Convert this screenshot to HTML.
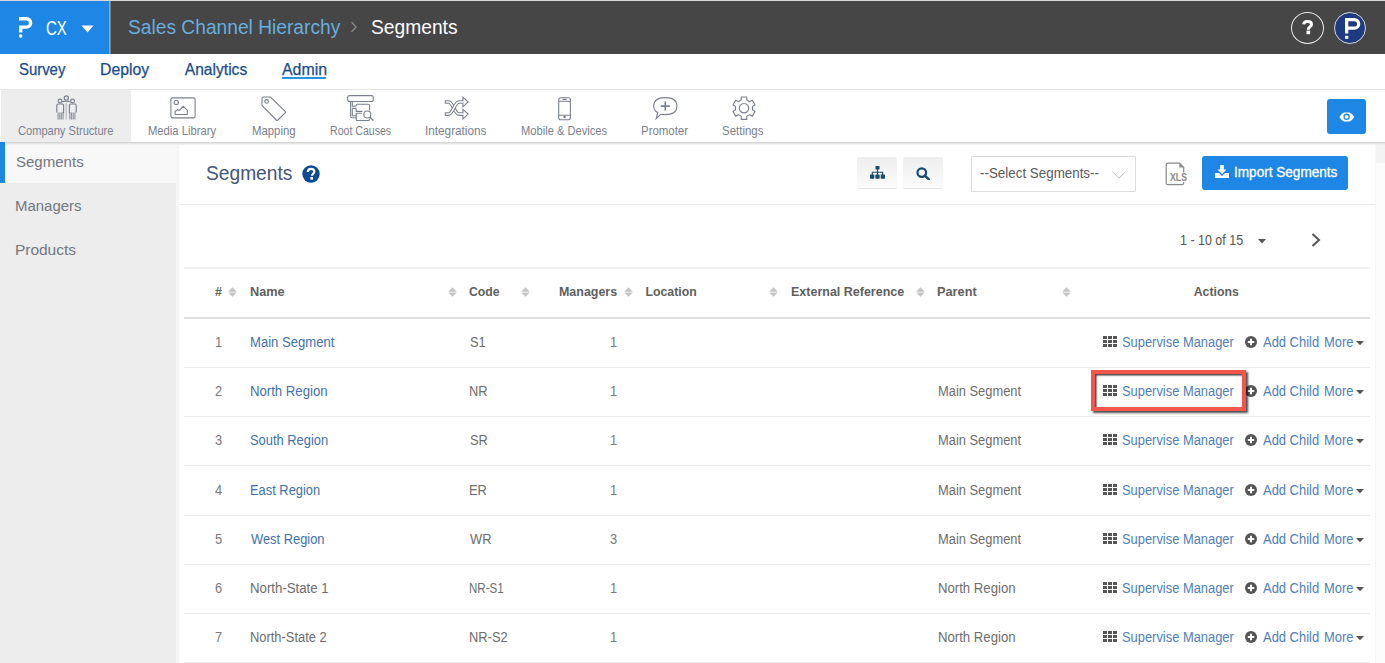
<!DOCTYPE html>
<html><head><meta charset="utf-8">
<style>
*{box-sizing:border-box;margin:0;padding:0}
html,body{width:1385px;height:663px;overflow:hidden;background:#f7f7f7;font-family:"Liberation Sans",sans-serif;position:relative}
.a{position:absolute;white-space:nowrap;line-height:1}
#top{position:absolute;left:0;top:0;width:1385px;height:54px;background:#464646;border-top:1px solid #d8d8d8}
#brand{position:absolute;left:0;top:1px;width:109px;height:53px;background:#1e87e5}
#brandsep{position:absolute;left:109px;top:1px;width:2px;height:53px;background:linear-gradient(90deg,#6db0ea 50%,#7a7f85 50%)}
#nav{position:absolute;left:0;top:54px;width:1385px;height:35px;background:#fff}
#tb{position:absolute;left:0;top:89px;width:1385px;height:53px;background:#fff;border-top:1px solid #e3e3e3}
#tbshadow{position:absolute;left:0;top:142px;width:1385px;height:3px;background:linear-gradient(#d0d0d0,#e8e8e8 60%,#f5f5f5)}
#side{position:absolute;left:0;top:145px;width:176px;height:518px;background:#ededed}
#panel{position:absolute;left:179px;top:145px;width:1196px;height:518px;background:#fff}
.tbl{color:#7b818d}
.nav{color:#1b4c8c;-webkit-text-stroke:0.25px #1b4c8c}
.side{color:#73777f}
.th{color:#606060}
.td{color:#6e6e6e}
.num{color:#7a7a7a}
.lk{color:#4272ad}
.al{color:#5080b8}
</style></head>
<body>
<div id="top"></div>
<div id="brand"></div>
<div id="brandsep"></div>
<div id="nav"></div>
<div id="tb"></div>
<div id="tbshadow"></div>
<div id="side"></div>
<div id="panel"></div>
<svg class="a" style="left:18.75px;top:17.2px" width="16" height="22" viewBox="0 0 16 22"><path d="M0 1.7 H7.45 A4.2 4.2 0 0 1 7.45 10.1 H1.7 V15.6" fill="none" stroke="#fff" stroke-width="3.4" stroke-linejoin="miter"/><circle cx="1.6" cy="19" r="1.8" fill="#fff"/></svg>
<div class="a " style="left:46.30px;top:18px;font-size:20px;color:#fff;transform:scaleX(0.7510);transform-origin:0 0;">CX</div>
<svg class="a" style="left:81px;top:25px" width="13" height="8" viewBox="0 0 13 8"><path d="M0.5 0.5 H12.5 L6.5 7.5 Z" fill="#fff"/></svg>
<div class="a " style="left:128.10px;top:17px;font-size:20.5px;color:#68aedf;transform:scaleX(0.9363);transform-origin:0 0;">Sales Channel Hierarchy</div>
<svg class="a" style="left:350px;top:21px" width="8" height="12" viewBox="0 0 8 12"><path d="M1.5 1 L6 6 L1.5 11" fill="none" stroke="#8a8a8a" stroke-width="1.3"/></svg>
<div class="a " style="left:371.00px;top:18px;font-size:19.6px;color:#fff;transform:scaleX(0.9814);transform-origin:0 0;">Segments</div>
<div class="a" style="left:1291px;top:12px;width:33px;height:32px;border:1.2px solid #e8e8e8;border-radius:50%"></div>
<svg class="a" style="left:1301px;top:19px" width="14" height="17" viewBox="0 0 14 17"><path d="M2.7 5.4 C2.9 3.3 4.6 2.6 6.6 2.6 C8.7 2.6 10.5 3.6 10.5 5.4 C10.5 7.6 7.3 7.8 7.3 10.8" fill="none" stroke="#fff" stroke-width="3"/><rect x="5.5" y="11.6" width="3.6" height="3.6" fill="#fff"/></svg>
<div class="a" style="left:1334px;top:12px;width:32px;height:32px;border:1.2px solid #d8d8d8;border-radius:50%;background:#1e3a80"></div>
<svg class="a" style="left:1344.8px;top:17.7px" width="17" height="22" viewBox="0 0 17 22"><path d="M1.65 15.6 V1.65 H9.4 A4.275 4.275 0 0 1 9.4 10.2 H1.65" fill="none" stroke="#fff" stroke-width="3.3" stroke-linejoin="miter"/><rect x="0" y="17.8" width="3.3" height="3" fill="#fff"/></svg>
<div class="a nav" style="left:18.73px;top:62px;font-size:15.6px;transform:scaleX(0.9550);transform-origin:0 0;">Survey</div>
<div class="a nav" style="left:99.97px;top:62px;font-size:15.6px;transform:scaleX(1.0118);transform-origin:0 0;">Deploy</div>
<div class="a nav" style="left:184.80px;top:62px;font-size:15.6px;">Analytics</div>
<div class="a nav" style="left:282.10px;top:62px;font-size:15.6px;transform:scaleX(1.0198);transform-origin:0 0;">Admin</div>
<div class="a" style="left:282px;top:77px;width:44px;height:2px;background:#2a93e0"></div>
<div class="a" style="left:1px;top:90px;width:130px;height:52px;background:#ededed"></div>
<svg class="a" style="left:50px;top:92px" width="34" height="30" viewBox="0 0 34 30" fill="none" stroke="#7a818e" stroke-width="1.15"><circle cx="16.3" cy="5.9" r="2.1"/><circle cx="10" cy="9" r="1.9"/><circle cx="22.6" cy="9" r="1.9"/><path d="M12 9.8 Q16.3 8.6 20.6 9.8"/><path d="M6.8 20.6 V13.3 Q6.8 12 8.1 12 H12.3 Q13.6 12 13.6 13.3 V20.6 H12.6"/><path d="M26.2 20.6 V13.3 Q26.2 12 24.9 12 H20.7 Q19.4 12 19.4 13.3 V20.6 H20.4"/><path d="M16.3 11 V27.5" stroke-opacity="0.45"/><path d="M8 20.5 V27.6 M9.7 20.5 V27.6 M11.4 20.5 V27.6 M13.1 20.5 V27.6 M19.8 20.5 V27.6 M21.5 20.5 V27.6 M23.2 20.5 V27.6 M24.9 20.5 V27.6" stroke-opacity="0.8"/></svg>
<svg class="a" style="left:169.5px;top:97px" width="26" height="22" viewBox="0 0 26 22" fill="none" stroke="#7a818e" stroke-width="1.1"><rect x="0.9" y="0.9" width="24.2" height="20" rx="1.6"/><circle cx="6.3" cy="5.4" r="2.1"/><path d="M3.6 17.5 V14.5 L6.2 12.5 L7.6 13.6 L11.7 9.3 L15.8 13.2 V17.5 Z" transform="translate(1.5 0)"/></svg>
<svg class="a" style="left:261px;top:96px" width="26" height="25" viewBox="0 0 26 25" fill="none" stroke="#7a818e" stroke-width="1.1"><path d="M1 2.5 Q1 1 2.5 1 H9.5 L24.2 15.3 Q25 16.1 24.2 16.9 L16.9 24 Q16.1 24.8 15.3 24 L1 9.5 Z"/><circle cx="5.6" cy="5.4" r="1.8"/></svg>
<svg class="a" style="left:340px;top:92px" width="40" height="34" viewBox="0 0 40 34" fill="none" stroke="#7a818e" stroke-width="1.1"><rect x="7.6" y="3.6" width="25.7" height="5.9" rx="2"/><path d="M10.6 9.5 V24.3 Q10.6 25.7 12 25.7 H16.2"/><path d="M12.3 9.5 V14.3 H16.2 M12.3 16.4 H16.2 M12.3 16.4 V23.8 H16.2"/><path d="M16.2 14 V13.3 Q16.2 12.3 17.2 12.3 H28.5 Q29.5 12.3 29.5 13.3 V18.5"/><path d="M16.2 16.4 V19.4 H22.5 M22 21.3 H16.2 V27.5 Q16.2 28.5 17.2 28.5 H28.5 Q29.5 28.5 29.5 27.5 V26.5"/><circle cx="27.3" cy="22.5" r="3.5" fill="#fff"/><path d="M29.9 25.1 L33.4 28.8" stroke-width="1.4"/></svg>
<svg class="a" style="left:438px;top:92px" width="36" height="32" viewBox="0 0 36 32" fill="none"><g stroke="#7a818e" stroke-width="3.7"><path d="M6.8 10 H10.5 C15 10 16.5 22.1 21 22.1 H25"/></g><g stroke="#7a818e" stroke-width="1.1"><path d="M24.9 17.3 L30.2 22.1 L24.9 26.900000000000002 Z" fill="#fff"/></g><g stroke="#fff" stroke-width="1.5"><path d="M7.9 10 H10.5 C15 10 16.5 22.1 21 22.1 H25.6"/></g><g stroke="#7a818e" stroke-width="3.7"><path d="M6.8 22.1 H10.5 C15 22.1 16.5 10 21 10 H25"/></g><g stroke="#7a818e" stroke-width="1.1"><path d="M24.9 5.2 L30.2 10 L24.9 14.8 Z" fill="#fff"/></g><g stroke="#fff" stroke-width="1.5"><path d="M7.9 22.1 H10.5 C15 22.1 16.5 10 21 10 H25.6"/></g></svg>
<svg class="a" style="left:557.5px;top:96.5px" width="14" height="24" viewBox="0 0 14 24" fill="none" stroke="#7a818e" stroke-width="1.1"><rect x="0.7" y="0.7" width="11.7" height="22" rx="2"/><path d="M0.7 4.3 H12.4 M0.7 18.2 H12.4 M4.5 2.4 H8.6"/><circle cx="6.55" cy="20.1" r="0.7" fill="#7a818e"/></svg>
<svg class="a" style="left:652.5px;top:97px" width="26" height="23" viewBox="0 0 26 23" fill="none" stroke="#7a818e" stroke-width="1.1"><path d="M4.8 15.6 Q0.7 13.6 0.7 9.2 Q0.7 0.6 12.3 0.6 Q23.9 0.6 23.9 9.2 Q23.9 17.6 12.3 17.6 Q9.8 17.6 8 17.2 L3.2 21.6 Z"/><path d="M12.3 4.6 V13.6 M7.8 9.1 H16.8" stroke-width="1.7"/></svg>
<svg class="a" style="left:732px;top:96px" width="24" height="25" viewBox="0 0 24 25" fill="none" stroke="#7a818e" stroke-width="1.15"><path d="M9.20 4.07 L9.32 1.02 L14.68 1.02 L14.80 4.07 A8.6 8.6 0 0 1 17.64 5.71 L20.34 4.28 L23.03 8.93 L20.44 10.56 A8.6 8.6 0 0 1 20.44 13.84 L23.03 15.47 L20.34 20.12 L17.64 18.69 A8.6 8.6 0 0 1 14.80 20.33 L14.68 23.38 L9.32 23.38 L9.20 20.33 A8.6 8.6 0 0 1 6.36 18.69 L3.66 20.12 L0.97 15.47 L3.56 13.84 A8.6 8.6 0 0 1 3.56 10.56 L0.97 8.93 L3.66 4.28 L6.36 5.71 A8.6 8.6 0 0 1 9.20 4.07 Z" stroke-linejoin="round"/><circle cx="12" cy="12.2" r="4.7"/></svg>
<div class="a tbl" style="left:18.45px;top:125px;font-size:12.2px;transform:scaleX(0.9090);transform-origin:0 0;">Company Structure</div>
<div class="a tbl" style="left:148.48px;top:125px;font-size:12.2px;transform:scaleX(0.9217);transform-origin:0 0;">Media Library</div>
<div class="a tbl" style="left:251.87px;top:125px;font-size:12.2px;transform:scaleX(0.9331);transform-origin:0 0;">Mapping</div>
<div class="a tbl" style="left:329.73px;top:125px;font-size:12.2px;transform:scaleX(0.8680);transform-origin:0 0;">Root Causes</div>
<div class="a tbl" style="left:424.94px;top:125px;font-size:12.2px;transform:scaleX(0.9638);transform-origin:0 0;">Integrations</div>
<div class="a tbl" style="left:520.69px;top:125px;font-size:12.2px;transform:scaleX(0.9144);transform-origin:0 0;">Mobile &amp; Devices</div>
<div class="a tbl" style="left:641.06px;top:125px;font-size:12.2px;transform:scaleX(0.9386);transform-origin:0 0;">Promoter</div>
<div class="a tbl" style="left:722.48px;top:125px;font-size:12.2px;transform:scaleX(0.9413);transform-origin:0 0;">Settings</div>
<div class="a" style="left:1327px;top:99px;width:39px;height:35px;background:#1e87e5;border-radius:3px"></div>
<svg class="a" style="left:1339px;top:111.8px" width="15.5" height="10" viewBox="0 0 15.5 10"><path d="M0.3 5 Q2.5 1.2 5 0.5 H10.5 Q13 1.2 15.2 5 Q13 8.8 10.5 9.5 H5 Q2.5 8.8 0.3 5 Z" fill="#fff"/><circle cx="7.6" cy="4.8" r="3.2" fill="#1e87e5"/><circle cx="7.6" cy="4.8" r="1.9" fill="#fff"/></svg>
<div class="a" style="left:0;top:145px;width:176px;height:38px;background:#f8f8f8"></div>
<div class="a" style="left:0;top:142px;width:4.5px;height:41px;background:#1e87e5"></div>
<div class="a side" style="left:15.63px;top:154px;font-size:15.5px;transform:scaleX(0.9692);transform-origin:0 0;">Segments</div>
<div class="a side" style="left:14.93px;top:198px;font-size:15.5px;transform:scaleX(0.9653);transform-origin:0 0;">Managers</div>
<div class="a side" style="left:14.89px;top:242px;font-size:15.5px;">Products</div>
<div class="a" style="left:1376px;top:145px;width:9px;height:18px;background:#f3f3f3"></div>
<div class="a" style="left:1376px;top:163px;width:9px;height:500px;background:#fcfcfc"></div>
<div class="a " style="left:206.20px;top:164px;font-size:19.6px;color:#46557a;transform:scaleX(0.9791);transform-origin:0 0;">Segments</div>
<svg class="a" style="left:302px;top:164.5px" width="18" height="18" viewBox="0 0 18 18"><circle cx="9" cy="9" r="8.7" fill="#0c4b94"/><path d="M5.8 7 C5.8 4.8 7.2 3.8 9 3.8 C10.9 3.8 12.3 4.9 12.3 6.6 C12.3 8.7 10 8.9 10 10.8" fill="none" stroke="#fff" stroke-width="2.2"/><rect x="8.4" y="12" width="2.6" height="2.6" fill="#fff"/></svg>
<div class="a" style="left:179px;top:204px;width:1196px;height:1px;background:#e8eaef"></div>
<div class="a" style="left:856.5px;top:157px;width:40px;height:32px;background:linear-gradient(#eeeeee,#fbfbfb);border-bottom:1px solid #e6e6e6;border-radius:2px"></div>
<div class="a" style="left:903px;top:157px;width:40px;height:32px;background:linear-gradient(#eeeeee,#fbfbfb);border-bottom:1px solid #e6e6e6;border-radius:2px"></div>
<svg class="a" style="left:869.5px;top:166px" width="15" height="13" viewBox="0 0 15 13" fill="#174b6e"><rect x="5.5" y="0" width="4" height="3.5" rx="0.5"/><path d="M7.5 3 V6 M2.3 9 V6.2 H12.7 V9" fill="none" stroke="#174b6e" stroke-width="1.1"/><rect x="0" y="8.5" width="4.3" height="4.2" rx="0.6"/><rect x="5.35" y="8.5" width="4.3" height="4.2" rx="0.6"/><rect x="10.7" y="8.5" width="4.3" height="4.2" rx="0.6"/><path d="M7.5 6 V9" stroke="#174b6e" stroke-width="1.1"/></svg>
<svg class="a" style="left:915.5px;top:166.5px" width="15" height="13" viewBox="0 0 15 13"><circle cx="5.8" cy="5.6" r="4.3" fill="none" stroke="#174b6e" stroke-width="2.2"/><path d="M8.8 8.6 L12.8 12.4" stroke="#174b6e" stroke-width="2.4" stroke-linecap="round"/></svg>
<div class="a" style="left:970.5px;top:156px;width:165px;height:36px;background:#fff;border:1px solid #dcdcdc;border-radius:1px"></div>
<div class="a " style="left:980.08px;top:166px;font-size:14.3px;color:#5a5a5a;transform:scaleX(0.9359);transform-origin:0 0;">--Select Segments--</div>
<svg class="a" style="left:1112px;top:170.5px" width="14" height="8" viewBox="0 0 14 8"><path d="M0.5 0.8 L7 7.2 L13.5 0.8" fill="none" stroke="#b9bcc2" stroke-width="1"/></svg>
<svg class="a" style="left:1165px;top:162px" width="24" height="24" viewBox="0 0 24 24"><path d="M18.7 10.4 V5.4 L14.5 1.2 H3 Q1.2 1.2 1.2 3 V20.9 Q1.2 22.7 3 22.7 H16.9 Q18.7 22.7 18.7 20.9 V19.9" fill="none" stroke="#8b8b8b" stroke-width="1.25"/><path d="M14.3 1.2 V5.6 H18.7 Z" fill="#8b8b8b"/><text x="5" y="18.7" font-family="Liberation Sans" font-size="10.6" font-weight="bold" fill="#8b8b8b" textLength="17" lengthAdjust="spacingAndGlyphs">XLS</text></svg>
<div class="a" style="left:1202px;top:156px;width:146px;height:34px;background:#1e87e5;border-radius:3px"></div>
<svg class="a" style="left:1215px;top:164.5px" width="14" height="13" viewBox="0 0 14 13" fill="#fff"><path d="M5.2 0 H8.8 V4.5 H11.5 L7 9 L2.5 4.5 H5.2 Z"/><path d="M0 8 H4 L7 11 L10 8 H14 V13 H0 Z"/></svg>
<div class="a " style="left:1233.74px;top:165px;font-size:14px;color:#fff;transform:scaleX(0.9698);transform-origin:0 0;-webkit-text-stroke:0.3px #fff;">Import Segments</div>
<div class="a " style="left:1180.02px;top:233px;font-size:14px;color:#555;transform:scaleX(0.8907);transform-origin:0 0;">1 - 10 of 15</div>
<svg class="a" style="left:1257.5px;top:238.5px" width="8" height="5" viewBox="0 0 8 5"><path d="M0 0 H8 L4 4.5 Z" fill="#555"/></svg>
<svg class="a" style="left:1310.5px;top:232.5px" width="10" height="14" viewBox="0 0 10 14"><path d="M1.5 1 L8 7 L1.5 13" fill="none" stroke="#555" stroke-width="2"/></svg>
<div class="a" style="left:184px;top:267px;width:1186px;height:2px;background:#f2f2f2"></div>
<div class="a" style="left:184px;top:317px;width:1186px;height:2px;background:#dedede"></div>
<div class="a th" style="left:214.50px;top:286px;font-size:12.3px;font-weight:700;transform:scaleX(1.0134);transform-origin:0 0;">#</div>
<svg class="a" style="left:228px;top:287px" width="9" height="10" viewBox="-0.5 0 9 10" fill="#c4c4c4"><path d="M4 0.2 L8.3 4.7 H-0.3 Z M-0.3 5.4 H8.3 L4 9.8 Z"/></svg>
<div class="a th" style="left:250.17px;top:286px;font-size:12.3px;font-weight:700;transform:scaleX(1.0337);transform-origin:0 0;">Name</div>
<svg class="a" style="left:448px;top:287px" width="9" height="10" viewBox="-0.5 0 9 10" fill="#c4c4c4"><path d="M4 0.2 L8.3 4.7 H-0.3 Z M-0.3 5.4 H8.3 L4 9.8 Z"/></svg>
<div class="a th" style="left:469.20px;top:286px;font-size:12.3px;font-weight:700;transform:scaleX(0.9947);transform-origin:0 0;">Code</div>
<svg class="a" style="left:520.5px;top:287px" width="9" height="10" viewBox="-0.5 0 9 10" fill="#c4c4c4"><path d="M4 0.2 L8.3 4.7 H-0.3 Z M-0.3 5.4 H8.3 L4 9.8 Z"/></svg>
<div class="a th" style="left:558.79px;top:286px;font-size:12.3px;font-weight:700;transform:scaleX(1.0119);transform-origin:0 0;">Managers</div>
<svg class="a" style="left:623.5px;top:287px" width="9" height="10" viewBox="-0.5 0 9 10" fill="#c4c4c4"><path d="M4 0.2 L8.3 4.7 H-0.3 Z M-0.3 5.4 H8.3 L4 9.8 Z"/></svg>
<div class="a th" style="left:645.50px;top:286px;font-size:12.3px;font-weight:700;">Location</div>
<svg class="a" style="left:769px;top:287px" width="9" height="10" viewBox="-0.5 0 9 10" fill="#c4c4c4"><path d="M4 0.2 L8.3 4.7 H-0.3 Z M-0.3 5.4 H8.3 L4 9.8 Z"/></svg>
<div class="a th" style="left:791.39px;top:286px;font-size:12.3px;font-weight:700;transform:scaleX(1.0159);transform-origin:0 0;">External Reference</div>
<svg class="a" style="left:915.5px;top:287px" width="9" height="10" viewBox="-0.5 0 9 10" fill="#c4c4c4"><path d="M4 0.2 L8.3 4.7 H-0.3 Z M-0.3 5.4 H8.3 L4 9.8 Z"/></svg>
<div class="a th" style="left:937.47px;top:286px;font-size:12.3px;font-weight:700;transform:scaleX(1.0366);transform-origin:0 0;">Parent</div>
<svg class="a" style="left:1062px;top:287px" width="9" height="10" viewBox="-0.5 0 9 10" fill="#c4c4c4"><path d="M4 0.2 L8.3 4.7 H-0.3 Z M-0.3 5.4 H8.3 L4 9.8 Z"/></svg>
<div class="a th" style="left:1193.70px;top:286px;font-size:12.3px;font-weight:700;">Actions</div>
<div class="a num" style="left:215.28px;top:335px;font-size:14px;transform:scaleX(0.9204);transform-origin:0 0;">1</div>
<div class="a lk" style="left:249.58px;top:335px;font-size:14px;transform:scaleX(0.9347);transform-origin:0 0;">Main Segment</div>
<div class="a td" style="left:469.60px;top:335px;font-size:14px;transform:scaleX(0.9204);transform-origin:0 0;">S1</div>
<div class="a num" style="left:610.36px;top:335px;font-size:14px;transform:scaleX(0.9204);transform-origin:0 0;">1</div>
<svg class="a" style="left:1103px;top:336.00px" width="14" height="11" viewBox="0 0 14 11" fill="#555"><rect x="0" y="0" width="4" height="3"/><rect x="5" y="0" width="4" height="3"/><rect x="10" y="0" width="4" height="3"/><rect x="0" y="4" width="4" height="3"/><rect x="5" y="4" width="4" height="3"/><rect x="10" y="4" width="4" height="3"/><rect x="0" y="8" width="4" height="3"/><rect x="5" y="8" width="4" height="3"/><rect x="10" y="8" width="4" height="3"/></svg>
<div class="a al" style="left:1122.00px;top:336px;font-size:13.8px;transform:scaleX(0.9348);transform-origin:0 0;">Supervise Manager</div>
<svg class="a" style="left:1245px;top:335.80px" width="12" height="12" viewBox="0 0 12 12"><circle cx="6" cy="6" r="6" fill="#555"/><path d="M6 2.8 V9.2 M2.8 6 H9.2" stroke="#fff" stroke-width="2"/></svg>
<div class="a al" style="left:1263.00px;top:336px;font-size:13.8px;transform:scaleX(0.9380);transform-origin:0 0;">Add Child</div>
<div class="a al" style="left:1323.69px;top:336px;font-size:13.8px;transform:scaleX(0.9361);transform-origin:0 0;">More</div>
<svg class="a" style="left:1355.5px;top:341.20px" width="8" height="5" viewBox="0 0 8 5"><path d="M0 0 H8 L4 4.2 Z" fill="#555"/></svg>
<div class="a" style="left:184px;top:367.00px;width:1186px;height:1px;background:#ececec"></div>
<div class="a num" style="left:215.38px;top:384px;font-size:14px;transform:scaleX(0.9204);transform-origin:0 0;">2</div>
<div class="a lk" style="left:249.57px;top:384px;font-size:14px;transform:scaleX(0.9403);transform-origin:0 0;">North Region</div>
<div class="a td" style="left:468.99px;top:384px;font-size:14px;transform:scaleX(0.9204);transform-origin:0 0;">NR</div>
<div class="a num" style="left:610.36px;top:384px;font-size:14px;transform:scaleX(0.9204);transform-origin:0 0;">1</div>
<div class="a td" style="left:937.99px;top:384px;font-size:14px;transform:scaleX(0.9204);transform-origin:0 0;">Main Segment</div>
<svg class="a" style="left:1103px;top:385.00px" width="14" height="11" viewBox="0 0 14 11" fill="#555"><rect x="0" y="0" width="4" height="3"/><rect x="5" y="0" width="4" height="3"/><rect x="10" y="0" width="4" height="3"/><rect x="0" y="4" width="4" height="3"/><rect x="5" y="4" width="4" height="3"/><rect x="10" y="4" width="4" height="3"/><rect x="0" y="8" width="4" height="3"/><rect x="5" y="8" width="4" height="3"/><rect x="10" y="8" width="4" height="3"/></svg>
<div class="a al" style="left:1122.00px;top:385px;font-size:13.8px;transform:scaleX(0.9348);transform-origin:0 0;">Supervise Manager</div>
<svg class="a" style="left:1245px;top:384.80px" width="12" height="12" viewBox="0 0 12 12"><circle cx="6" cy="6" r="6" fill="#555"/><path d="M6 2.8 V9.2 M2.8 6 H9.2" stroke="#fff" stroke-width="2"/></svg>
<div class="a al" style="left:1263.00px;top:385px;font-size:13.8px;transform:scaleX(0.9380);transform-origin:0 0;">Add Child</div>
<div class="a al" style="left:1323.69px;top:385px;font-size:13.8px;transform:scaleX(0.9361);transform-origin:0 0;">More</div>
<svg class="a" style="left:1355.5px;top:390.20px" width="8" height="5" viewBox="0 0 8 5"><path d="M0 0 H8 L4 4.2 Z" fill="#555"/></svg>
<div class="a" style="left:184px;top:416.00px;width:1186px;height:1px;background:#ececec"></div>
<div class="a num" style="left:215.48px;top:433px;font-size:14px;transform:scaleX(0.9204);transform-origin:0 0;">3</div>
<div class="a lk" style="left:250.20px;top:433px;font-size:14px;transform:scaleX(0.9204);transform-origin:0 0;">South Region</div>
<div class="a td" style="left:469.60px;top:433px;font-size:14px;transform:scaleX(0.9204);transform-origin:0 0;">SR</div>
<div class="a num" style="left:610.36px;top:433px;font-size:14px;transform:scaleX(0.9204);transform-origin:0 0;">1</div>
<div class="a td" style="left:937.99px;top:433px;font-size:14px;transform:scaleX(0.9204);transform-origin:0 0;">Main Segment</div>
<svg class="a" style="left:1103px;top:434.00px" width="14" height="11" viewBox="0 0 14 11" fill="#555"><rect x="0" y="0" width="4" height="3"/><rect x="5" y="0" width="4" height="3"/><rect x="10" y="0" width="4" height="3"/><rect x="0" y="4" width="4" height="3"/><rect x="5" y="4" width="4" height="3"/><rect x="10" y="4" width="4" height="3"/><rect x="0" y="8" width="4" height="3"/><rect x="5" y="8" width="4" height="3"/><rect x="10" y="8" width="4" height="3"/></svg>
<div class="a al" style="left:1122.00px;top:434px;font-size:13.8px;transform:scaleX(0.9348);transform-origin:0 0;">Supervise Manager</div>
<svg class="a" style="left:1245px;top:433.80px" width="12" height="12" viewBox="0 0 12 12"><circle cx="6" cy="6" r="6" fill="#555"/><path d="M6 2.8 V9.2 M2.8 6 H9.2" stroke="#fff" stroke-width="2"/></svg>
<div class="a al" style="left:1263.00px;top:434px;font-size:13.8px;transform:scaleX(0.9380);transform-origin:0 0;">Add Child</div>
<div class="a al" style="left:1323.69px;top:434px;font-size:13.8px;transform:scaleX(0.9361);transform-origin:0 0;">More</div>
<svg class="a" style="left:1355.5px;top:439.20px" width="8" height="5" viewBox="0 0 8 5"><path d="M0 0 H8 L4 4.2 Z" fill="#555"/></svg>
<div class="a" style="left:184px;top:465.00px;width:1186px;height:1px;background:#ececec"></div>
<div class="a num" style="left:215.48px;top:483px;font-size:14px;transform:scaleX(0.9204);transform-origin:0 0;">4</div>
<div class="a lk" style="left:249.59px;top:483px;font-size:14px;transform:scaleX(0.9204);transform-origin:0 0;">East Region</div>
<div class="a td" style="left:468.99px;top:483px;font-size:14px;transform:scaleX(0.9204);transform-origin:0 0;">ER</div>
<div class="a num" style="left:610.36px;top:483px;font-size:14px;transform:scaleX(0.9204);transform-origin:0 0;">1</div>
<div class="a td" style="left:937.99px;top:483px;font-size:14px;transform:scaleX(0.9204);transform-origin:0 0;">Main Segment</div>
<svg class="a" style="left:1103px;top:484.00px" width="14" height="11" viewBox="0 0 14 11" fill="#555"><rect x="0" y="0" width="4" height="3"/><rect x="5" y="0" width="4" height="3"/><rect x="10" y="0" width="4" height="3"/><rect x="0" y="4" width="4" height="3"/><rect x="5" y="4" width="4" height="3"/><rect x="10" y="4" width="4" height="3"/><rect x="0" y="8" width="4" height="3"/><rect x="5" y="8" width="4" height="3"/><rect x="10" y="8" width="4" height="3"/></svg>
<div class="a al" style="left:1122.00px;top:484px;font-size:13.8px;transform:scaleX(0.9348);transform-origin:0 0;">Supervise Manager</div>
<svg class="a" style="left:1245px;top:483.80px" width="12" height="12" viewBox="0 0 12 12"><circle cx="6" cy="6" r="6" fill="#555"/><path d="M6 2.8 V9.2 M2.8 6 H9.2" stroke="#fff" stroke-width="2"/></svg>
<div class="a al" style="left:1263.00px;top:484px;font-size:13.8px;transform:scaleX(0.9380);transform-origin:0 0;">Add Child</div>
<div class="a al" style="left:1323.69px;top:484px;font-size:13.8px;transform:scaleX(0.9361);transform-origin:0 0;">More</div>
<svg class="a" style="left:1355.5px;top:489.20px" width="8" height="5" viewBox="0 0 8 5"><path d="M0 0 H8 L4 4.2 Z" fill="#555"/></svg>
<div class="a" style="left:184px;top:515.00px;width:1186px;height:1px;background:#ececec"></div>
<div class="a num" style="left:215.48px;top:532px;font-size:14px;transform:scaleX(0.9204);transform-origin:0 0;">5</div>
<div class="a lk" style="left:250.60px;top:532px;font-size:14px;transform:scaleX(0.9204);transform-origin:0 0;">West Region</div>
<div class="a td" style="left:470.00px;top:532px;font-size:14px;transform:scaleX(0.9204);transform-origin:0 0;">WR</div>
<div class="a num" style="left:610.36px;top:532px;font-size:14px;transform:scaleX(0.9204);transform-origin:0 0;">3</div>
<div class="a td" style="left:937.99px;top:532px;font-size:14px;transform:scaleX(0.9204);transform-origin:0 0;">Main Segment</div>
<svg class="a" style="left:1103px;top:533.00px" width="14" height="11" viewBox="0 0 14 11" fill="#555"><rect x="0" y="0" width="4" height="3"/><rect x="5" y="0" width="4" height="3"/><rect x="10" y="0" width="4" height="3"/><rect x="0" y="4" width="4" height="3"/><rect x="5" y="4" width="4" height="3"/><rect x="10" y="4" width="4" height="3"/><rect x="0" y="8" width="4" height="3"/><rect x="5" y="8" width="4" height="3"/><rect x="10" y="8" width="4" height="3"/></svg>
<div class="a al" style="left:1122.00px;top:533px;font-size:13.8px;transform:scaleX(0.9348);transform-origin:0 0;">Supervise Manager</div>
<svg class="a" style="left:1245px;top:532.80px" width="12" height="12" viewBox="0 0 12 12"><circle cx="6" cy="6" r="6" fill="#555"/><path d="M6 2.8 V9.2 M2.8 6 H9.2" stroke="#fff" stroke-width="2"/></svg>
<div class="a al" style="left:1263.00px;top:533px;font-size:13.8px;transform:scaleX(0.9380);transform-origin:0 0;">Add Child</div>
<div class="a al" style="left:1323.69px;top:533px;font-size:13.8px;transform:scaleX(0.9361);transform-origin:0 0;">More</div>
<svg class="a" style="left:1355.5px;top:538.20px" width="8" height="5" viewBox="0 0 8 5"><path d="M0 0 H8 L4 4.2 Z" fill="#555"/></svg>
<div class="a" style="left:184px;top:564.00px;width:1186px;height:1px;background:#ececec"></div>
<div class="a num" style="left:215.38px;top:581px;font-size:14px;transform:scaleX(0.9204);transform-origin:0 0;">6</div>
<div class="a td" style="left:249.57px;top:581px;font-size:14px;transform:scaleX(0.9436);transform-origin:0 0;">North-State 1</div>
<div class="a td" style="left:469.10px;top:581px;font-size:14px;transform:scaleX(0.8229);transform-origin:0 0;">NR-S1</div>
<div class="a num" style="left:610.36px;top:581px;font-size:14px;transform:scaleX(0.9204);transform-origin:0 0;">1</div>
<div class="a td" style="left:937.97px;top:581px;font-size:14px;transform:scaleX(0.9403);transform-origin:0 0;">North Region</div>
<svg class="a" style="left:1103px;top:582.00px" width="14" height="11" viewBox="0 0 14 11" fill="#555"><rect x="0" y="0" width="4" height="3"/><rect x="5" y="0" width="4" height="3"/><rect x="10" y="0" width="4" height="3"/><rect x="0" y="4" width="4" height="3"/><rect x="5" y="4" width="4" height="3"/><rect x="10" y="4" width="4" height="3"/><rect x="0" y="8" width="4" height="3"/><rect x="5" y="8" width="4" height="3"/><rect x="10" y="8" width="4" height="3"/></svg>
<div class="a al" style="left:1122.00px;top:582px;font-size:13.8px;transform:scaleX(0.9348);transform-origin:0 0;">Supervise Manager</div>
<svg class="a" style="left:1245px;top:581.80px" width="12" height="12" viewBox="0 0 12 12"><circle cx="6" cy="6" r="6" fill="#555"/><path d="M6 2.8 V9.2 M2.8 6 H9.2" stroke="#fff" stroke-width="2"/></svg>
<div class="a al" style="left:1263.00px;top:582px;font-size:13.8px;transform:scaleX(0.9380);transform-origin:0 0;">Add Child</div>
<div class="a al" style="left:1323.69px;top:582px;font-size:13.8px;transform:scaleX(0.9361);transform-origin:0 0;">More</div>
<svg class="a" style="left:1355.5px;top:587.20px" width="8" height="5" viewBox="0 0 8 5"><path d="M0 0 H8 L4 4.2 Z" fill="#555"/></svg>
<div class="a" style="left:184px;top:613.00px;width:1186px;height:1px;background:#ececec"></div>
<div class="a num" style="left:215.38px;top:630px;font-size:14px;transform:scaleX(0.9204);transform-origin:0 0;">7</div>
<div class="a td" style="left:249.59px;top:630px;font-size:14px;transform:scaleX(0.9204);transform-origin:0 0;">North-State 2</div>
<div class="a td" style="left:468.99px;top:630px;font-size:14px;transform:scaleX(0.9204);transform-origin:0 0;">NR-S2</div>
<div class="a num" style="left:610.36px;top:630px;font-size:14px;transform:scaleX(0.9204);transform-origin:0 0;">1</div>
<div class="a td" style="left:937.97px;top:630px;font-size:14px;transform:scaleX(0.9403);transform-origin:0 0;">North Region</div>
<svg class="a" style="left:1103px;top:631.00px" width="14" height="11" viewBox="0 0 14 11" fill="#555"><rect x="0" y="0" width="4" height="3"/><rect x="5" y="0" width="4" height="3"/><rect x="10" y="0" width="4" height="3"/><rect x="0" y="4" width="4" height="3"/><rect x="5" y="4" width="4" height="3"/><rect x="10" y="4" width="4" height="3"/><rect x="0" y="8" width="4" height="3"/><rect x="5" y="8" width="4" height="3"/><rect x="10" y="8" width="4" height="3"/></svg>
<div class="a al" style="left:1122.00px;top:631px;font-size:13.8px;transform:scaleX(0.9348);transform-origin:0 0;">Supervise Manager</div>
<svg class="a" style="left:1245px;top:630.80px" width="12" height="12" viewBox="0 0 12 12"><circle cx="6" cy="6" r="6" fill="#555"/><path d="M6 2.8 V9.2 M2.8 6 H9.2" stroke="#fff" stroke-width="2"/></svg>
<div class="a al" style="left:1263.00px;top:631px;font-size:13.8px;transform:scaleX(0.9380);transform-origin:0 0;">Add Child</div>
<div class="a al" style="left:1323.69px;top:631px;font-size:13.8px;transform:scaleX(0.9361);transform-origin:0 0;">More</div>
<svg class="a" style="left:1355.5px;top:636.20px" width="8" height="5" viewBox="0 0 8 5"><path d="M0 0 H8 L4 4.2 Z" fill="#555"/></svg>
<div class="a" style="left:184px;top:662.00px;width:1186px;height:1px;background:#ececec"></div>
<div class="a" style="left:1091px;top:370px;width:155px;height:40.5px;border:4px solid #f2574a;box-shadow:inset 1.5px 1.5px 1.5px rgba(0,0,0,0.75),2px 2px 2px rgba(0,0,0,0.7)"></div>
</body></html>
